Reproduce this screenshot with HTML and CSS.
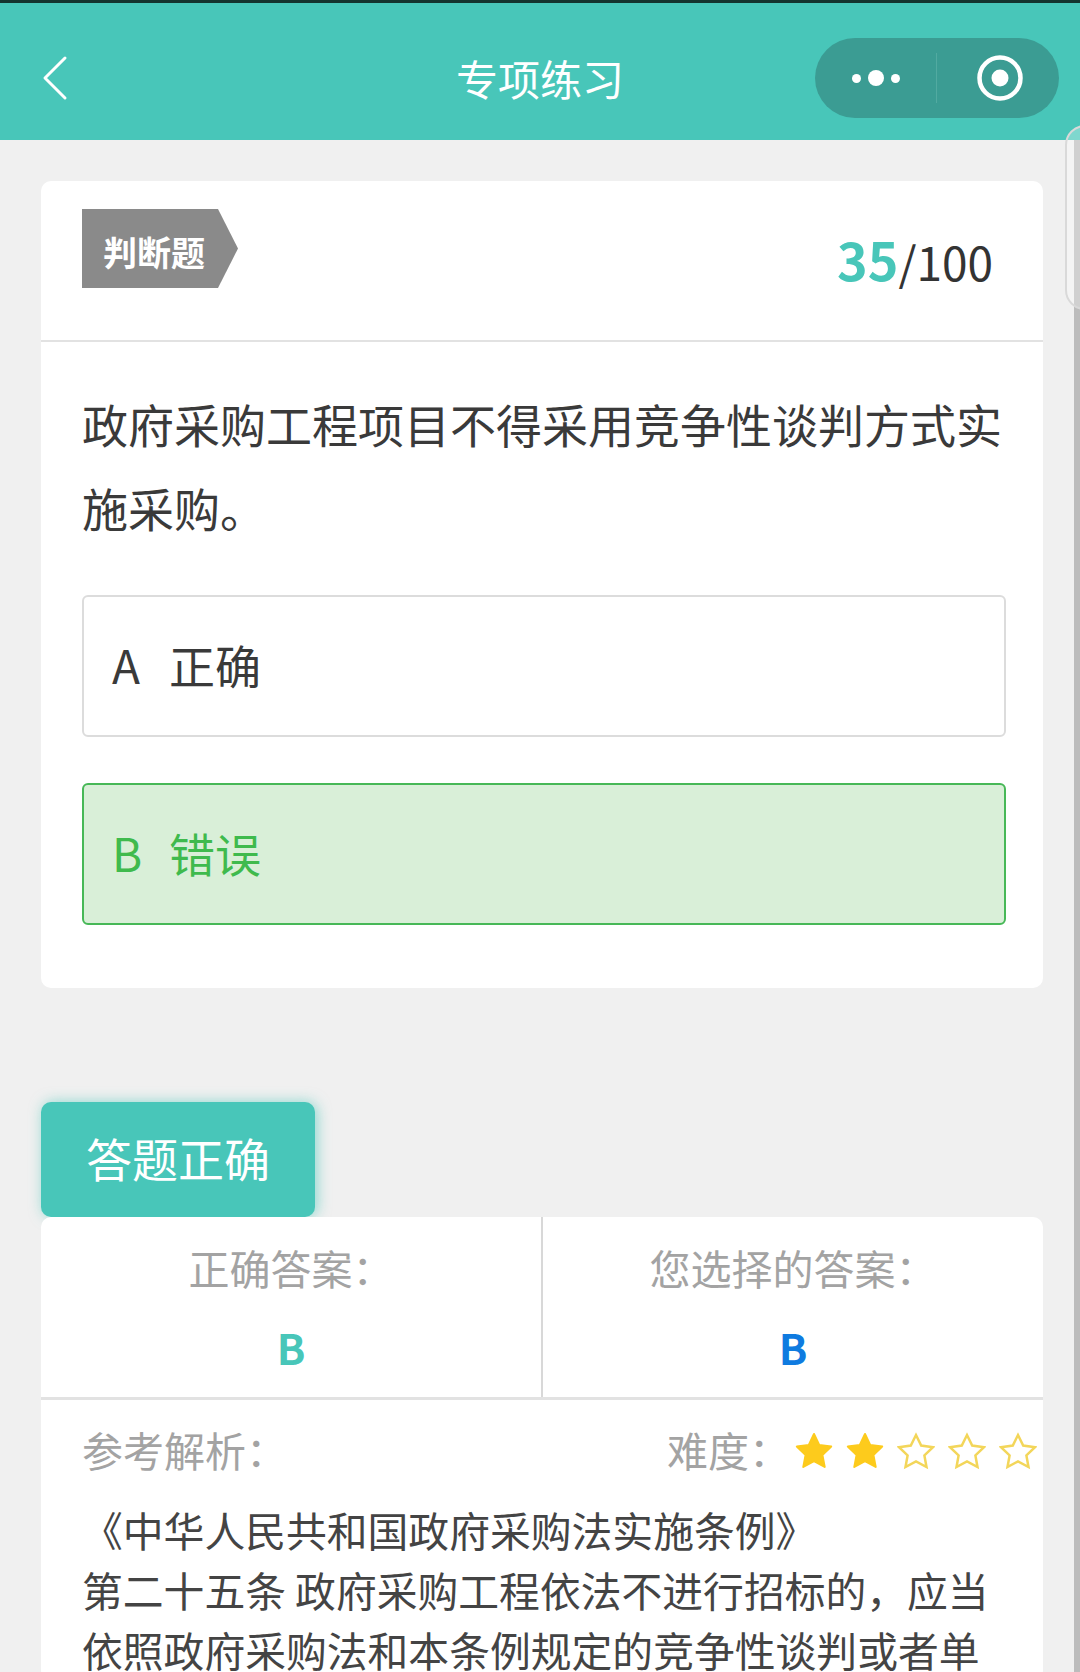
FILE: index.html
```html
<!DOCTYPE html>
<html lang="zh">
<head>
<meta charset="utf-8">
<title>专项练习</title>
<link rel="stylesheet" href="styles.css">
</head>
<body>
<div class="page">
  <div class="statusline"></div>
  <header class="nav">
    <svg class="back" width="30" height="46" viewBox="0 0 30 46"><path d="M25 3 L5 23 L25 43" fill="none" stroke="#fff" stroke-width="3" stroke-linecap="round" stroke-linejoin="round"/></svg>
    <div class="nav-title">专项练习</div>
    <div class="capsule">
      <div class="dots"><i class="dot"></i><i class="dot big"></i><i class="dot"></i></div>
      <div class="capsule-line"></div>
      <svg class="target" width="46" height="46" viewBox="0 0 46 46"><circle cx="23" cy="23" r="20.5" fill="none" stroke="#fff" stroke-width="4.5"/><circle cx="23" cy="23" r="8.5" fill="#fff"/></svg>
    </div>
  </header>
  <main class="content">
    <section class="card question">
      <div class="q-head">
        <div class="tag">判断题</div>
        <div class="count"><b>35</b>/100</div>
      </div>
      <div class="q-body">
        <p class="q-text">政府采购工程项目不得采用竞争性谈判方式实施采购。</p>
        <div class="option"><span class="letter">A</span>正确</div>
        <div class="option right"><span class="letter">B</span>错误</div>
      </div>
    </section>
    <div class="result">答题正确</div>
    <section class="card answer">
      <div class="ans-row">
        <div class="ans-cell">
          <div class="ans-label">正确答案：</div>
          <div class="ans-val teal">B</div>
        </div>
        <div class="ans-cell">
          <div class="ans-label">您选择的答案：</div>
          <div class="ans-val blue">B</div>
        </div>
      </div>
      <div class="analysis">
        <div class="an-head">
          <span class="an-label">参考解析：</span>
          <div class="difficulty">
            <span class="an-label">难度：</span>
            <div class="stars">
              <svg class="star" viewBox="0 0 38 38"><path class="on" d="M19 2l5.200 11 12 1.600-8.800 8.300 2.300 12L19 29l-10.700 5.900 2.300-12-8.800-8.300 12-1.600z"/></svg>
              <svg class="star" viewBox="0 0 38 38"><path class="on" d="M19 2l5.200 11 12 1.600-8.800 8.300 2.300 12L19 29l-10.700 5.900 2.300-12-8.800-8.300 12-1.600z"/></svg>
              <svg class="star" viewBox="0 0 38 38"><path class="off" d="M19 3l5.200 10.500 11.800 1.700-8.600 8.200 2.100 11.600L19 29.400l-10.500 5.600 2.100-11.600-8.600-8.200 11.800-1.700z"/></svg>
              <svg class="star" viewBox="0 0 38 38"><path class="off" d="M19 3l5.200 10.500 11.800 1.700-8.600 8.200 2.100 11.600L19 29.400l-10.500 5.600 2.100-11.600-8.600-8.200 11.800-1.700z"/></svg>
              <svg class="star" viewBox="0 0 38 38"><path class="off" d="M19 3l5.200 10.500 11.800 1.700-8.600 8.200 2.100 11.600L19 29.400l-10.500 5.600 2.100-11.600-8.600-8.200 11.800-1.700z"/></svg>
            </div>
          </div>
        </div>
        <p class="an-text">《中华人民共和国政府采购法实施条例》<br>第二十五条 政府采购工程依法不进行招标的，应当依照政府采购法和本条例规定的竞争性谈判或者单</p>
      </div>
    </section>
  </main>
  <div class="scrolltrack"></div>
  <div class="scrollhandle"></div>
</div>
</body>
</html>
```

FILE: styles.css
```css
* { box-sizing: border-box; }
html, body { margin: 0; padding: 0; }
body { width: 1080px; height: 1672px; overflow: hidden; background: #f0f0f0; font-family: "Noto Sans CJK SC", "Noto Sans", sans-serif; color: #3a3a3a; }
.page { position: relative; width: 1080px; height: 1672px; overflow: hidden; }
.statusline { height: 3px; background: #14342f; }
.nav { height: 137px; background: #48c6b9; display: flex; align-items: center; position: relative; padding: 0 21px 0 40px; justify-content: space-between; }
.back { margin-top: 13px; }
.nav-title { position: absolute; left: 0; right: 0; top: 46px; text-align: center; color: #fff; font-size: 42px; line-height: 58px; pointer-events: none; }
.capsule { width: 244px; height: 80px; margin-top: 13px; border-radius: 40px; background: #3b9c93; display: flex; align-items: center; }
.dots { width: 121px; display: flex; align-items: center; justify-content: center; gap: 7px; }
.dot { width: 9px; height: 9px; border-radius: 50%; background: #fff; }
.dot.big { width: 16px; height: 16px; }
.capsule-line { width: 1px; height: 50px; background: #52aaa1; }
.target { margin-left: 40px; }
.content { padding: 41px 37px 0 41px; }
.card { background: #fff; border-radius: 10px; }
.question { height: 807px; }
.q-head { height: 161px; border-bottom: 2px solid #e2e2e2; padding: 28px 50px 0 41px; display: flex; justify-content: space-between; align-items: flex-start; }
.tag { width: 156px; height: 79px; background: #8a8a8a; color: #fff; font-size: 34px; font-weight: 700; line-height: 85px; padding-left: 21px; clip-path: polygon(0 0, 136px 0, 156px 50%, 136px 100%, 0 100%); }
.count { margin-top: 18px; font-size: 46px; line-height: 64px; color: #333; }
.count b { color: #48c6b9; font-size: 52px; font-weight: 700; }
.q-body { padding: 39px 37px 0 41px; }
.q-text { margin: 0; font-size: 46px; line-height: 84px; }
.option { height: 142px; margin-top: 46px; border: 2px solid #dcdcdc; border-radius: 6px; font-size: 46px; display: flex; align-items: center; padding: 0 0 4px 28px; }
.option.right { background: #d9efd8; border-color: #47b857; color: #3fba4d; }
.letter { width: 57px; }
.result { width: 274px; height: 115px; margin-top: 114px; background: #48c6b9; color: #fff; font-size: 46px; line-height: 111px; text-align: center; border-radius: 10px; box-shadow: 2px 0 14px rgba(72, 198, 185, .6); }
.answer { position: relative; }
.ans-row { display: flex; height: 183px; border-bottom: 3px solid #e2e2e2; }
.ans-cell { flex: 1; text-align: center; padding-top: 21px; }
.ans-cell + .ans-cell { border-left: 2px solid #d8d8d8; }
.ans-label { font-size: 41px; line-height: 58px; color: #a3a3a3; }
.ans-val { font-size: 42px; font-weight: 700; line-height: 58px; margin-top: 22px; }
.teal { color: #48c6b9; }
.blue { color: #0f7be0; }
.analysis { padding: 19px 0 0 41px; }
.an-head { display: flex; justify-content: space-between; align-items: center; height: 60px; }
.an-label { font-size: 41px; line-height: 58px; color: #a3a3a3; }
.difficulty { display: flex; align-items: center; }
.stars { display: flex; gap: 13px; margin: 4px 6px 0 5px; }
.star { width: 38px; height: 38px; display: block; }
.star .on { fill: #fdcb1c; stroke: #fdcb1c; stroke-width: 2; stroke-linejoin: round; }
.star .off { fill: #fff; stroke: #f3d65a; stroke-width: 2.5; }
.an-text { margin: 21px 30px 0 0; font-size: 40.8px; line-height: 60px; color: #444; }
.scrolltrack { position: absolute; right: 0; top: 140px; bottom: 0; width: 6px; background: #bcbcbc; }
.scrollhandle { position: absolute; right: -33px; top: 125px; width: 48px; height: 185px; border: 2px solid #d9d9d9; border-radius: 20px; background: rgba(255, 255, 255, .3); }
```
